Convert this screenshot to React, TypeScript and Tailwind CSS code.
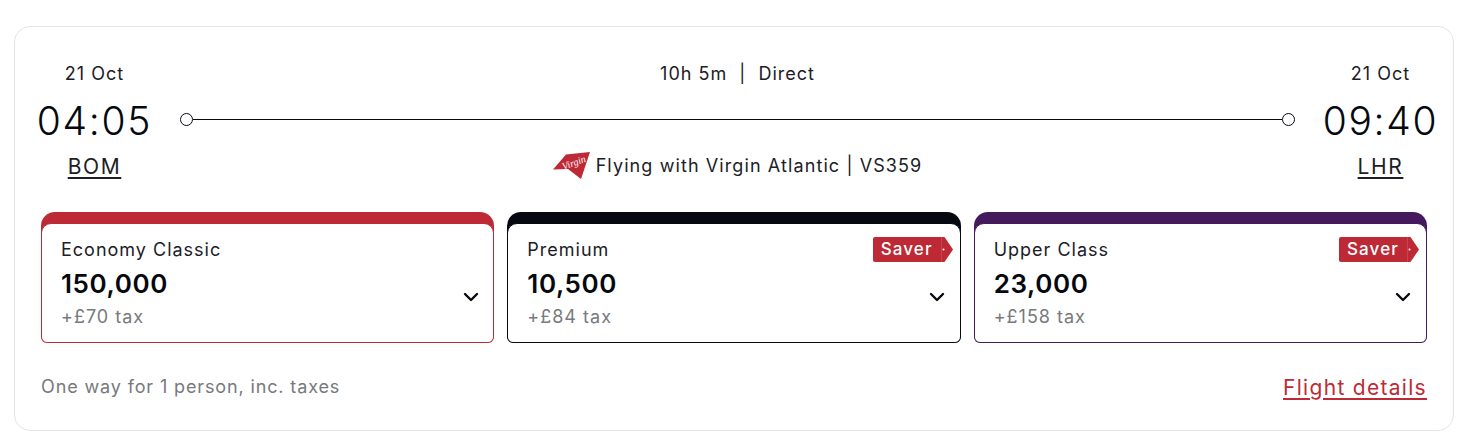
const font = { fontFamily: "Inter, 'Noto Sans', sans-serif" };

function Saver() {
  return (
    <div className="absolute right-[7px] top-[13px] flex h-[25px] items-center">
      <div className="flex h-[25px] w-[68px] items-center justify-center rounded-l-[2px] bg-[#bd2a36] text-[17px] font-medium tracking-[1.1px] text-white">
        Saver
      </div>
      <svg width="12" height="25" viewBox="0 0 12 25" aria-hidden>
        <path d="M0 0h3.5L12 12.5 3.5 25H0z" fill="#bd2a36" />
        <path d="M0 0v25" stroke="#e3868b" strokeWidth="0.6" />
        <circle cx="2.5" cy="12.5" r="1" fill="#fff" />
      </svg>
    </div>
  );
}

function Chevron() {
  return (
    <svg width="16" height="10" viewBox="0 0 16 10" fill="none" aria-hidden className="absolute right-[14.5px] top-[68px]">
      <path d="M2 2l6 6 6-6" stroke="#06090f" strokeWidth="2.4" strokeLinecap="round" strokeLinejoin="round" />
    </svg>
  );
}

function Cabin({
  name,
  points,
  tax,
  saver,
  topClass,
  borderClass,
}: {
  name: string;
  points: string;
  tax: string;
  saver?: boolean;
  topClass: string;
  borderClass: string;
}) {
  return (
    <div className={`h-[131px] flex-1 overflow-hidden rounded-t-[14px] rounded-b-[6px] ${topClass}`}>
      <div className={`relative mt-[11px] h-[120px] rounded-t-[10px] rounded-b-[6px] border bg-white pl-[19px] ${borderClass}`}>
        <p className="mt-[14px] text-[18px] leading-[24px] tracking-[1px] text-[#1c2026]">{name}</p>
        <p className="mt-[6px] text-[26px] font-semibold leading-[32px] tracking-[0.6px] text-[#06090f]">{points}</p>
        <p className="mt-[5px] text-[18px] leading-[24px] tracking-[1px] text-[#77797d]">{tax}</p>
        {saver && <Saver />}
        <Chevron />
      </div>
    </div>
  );
}

function VirginTail() {
  return (
    <svg width="38" height="28" viewBox="0 0 38 28" aria-hidden className="shrink-0">
      <path d="M0 17.5 L13 2.5 L37 0 L28 27 L15 17 Z" fill="#bd2a36" />
      <text x="21" y="14" textAnchor="middle" fontSize="10" fontStyle="italic" fontFamily="'Liberation Serif', serif" fill="#fff" transform="rotate(-20 21 11)">
        Virgin
      </text>
    </svg>
  );
}

function Endpoint({ date, time, code, className }: { date: string; time: string; code: string; className: string }) {
  return (
    <div className={`mt-[33px] flex w-[115px] flex-col items-center ${className}`}>
      <p className="text-[18px] leading-[28px] tracking-[1px] text-[#1c2026]">{date}</p>
      <p className="mt-[7px] text-[39px] font-light leading-[52px] tracking-[1.7px] text-[#06090f]">{time}</p>
      <p className="mt-[6px] text-[21px] leading-[28px] tracking-[1.6px] text-[#1c2026] underline underline-offset-[3px]">{code}</p>
    </div>
  );
}

export default function App() {
  return (
    <div className="h-[447px] w-[1472px] bg-white pl-[14px] pt-[26px]" style={font}>
      <div className="flex h-[405px] w-[1440px] flex-col rounded-[16px] border border-[#e5e5e5] px-[26px]">
        <div className="flex h-[185px] justify-between">
          <Endpoint date="21 Oct" time="04:05" code="BOM" className="-ml-[4px]" />
          <div className="mt-[33px] flex w-[1115px] flex-col items-center">
            <p className="text-[18px] leading-[28px] tracking-[1px] text-[#1c2026]">10h 5m &nbsp;|&nbsp; Direct</p>
            <div className="mt-[24px] flex h-[14px] w-full items-center">
              <span className="h-[13px] w-[13px] rounded-full border border-[#06090f] bg-white" />
              <span className="h-px flex-1 bg-[#06090f]" />
              <span className="h-[13px] w-[13px] rounded-full border border-[#06090f] bg-white" />
            </div>
            <div className="mt-[26px] flex items-center gap-[5px]">
              <VirginTail />
              <p className="text-[18px] leading-[28px] tracking-[1.1px] text-[#1c2026]">Flying with Virgin Atlantic | VS359</p>
            </div>
          </div>
          <Endpoint date="21 Oct" time="09:40" code="LHR" className="-mr-[11px]" />
        </div>
        <div className="flex gap-[13px]">
          <Cabin name="Economy Classic" points="150,000" tax="+£70 tax" topClass="bg-[#bd2a36]" borderClass="border-[#bd2a36]" />
          <Cabin name="Premium" points="10,500" tax="+£84 tax" saver topClass="bg-[#06090f]" borderClass="border-[#06090f]" />
          <Cabin name="Upper Class" points="23,000" tax="+£158 tax" saver topClass="bg-[#451a5c]" borderClass="border-[#451a5c]" />
        </div>
        <div className="mt-[29px] flex h-[30px] items-center justify-between">
          <p className="text-[18px] leading-[28px] tracking-[0.87px] text-[#77797d]">One way for 1 person, inc. taxes</p>
          <a className="mt-[1px] text-[21px] leading-[30px] tracking-[1.3px] text-[#bd2a36] underline underline-offset-[3px]">Flight details</a>
        </div>
      </div>
    </div>
  );
}
